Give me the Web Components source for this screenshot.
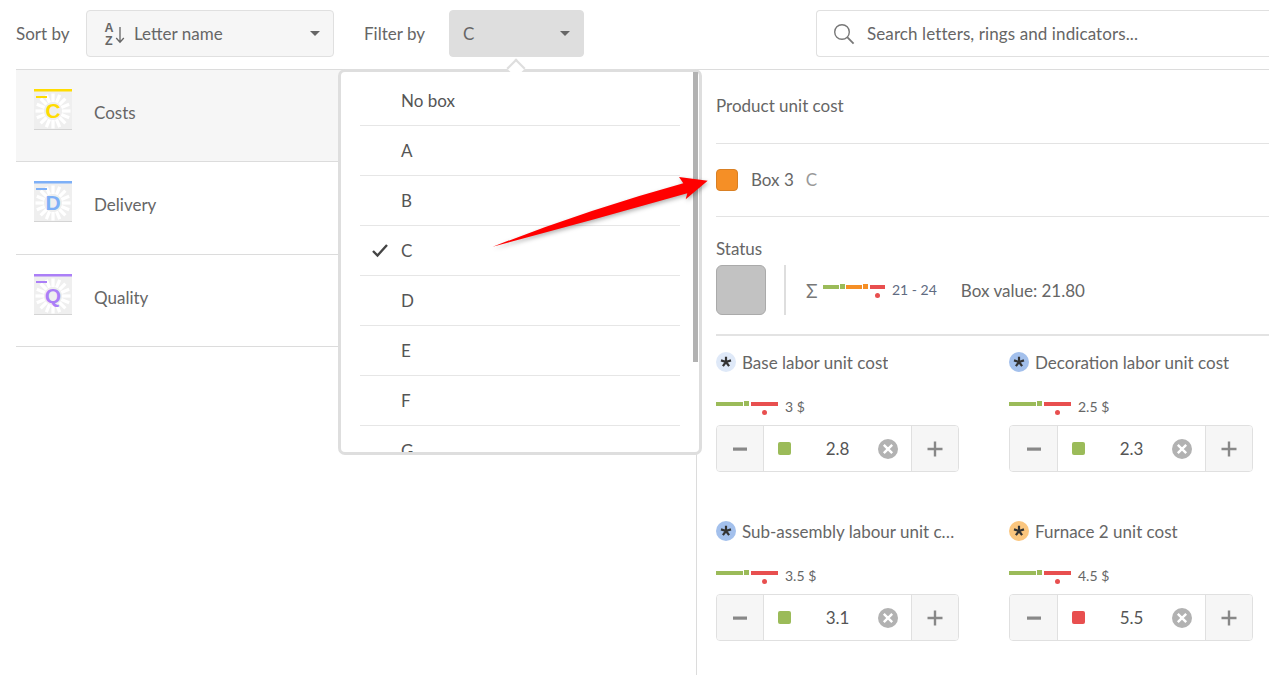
<!DOCTYPE html>
<html>
<head>
<meta charset="utf-8">
<title>Letters</title>
<style>
  html, body {
    margin: 0;
    height: 675px;
    overflow: hidden;
    background: #fff;
    font-family: "Lato", "Noto Sans", sans-serif;
    color: #666;
  }
</style>
</head>
<body>
<letters-page></letters-page>

<script>
const font = `"Lato", "Noto Sans", sans-serif`;

const colors = {
  green: "#9bbb59",
  orange: "#f58f26",
  red: "#e84f4f",
  line: "#e3e3e3"
};

class SelectBox extends HTMLElement {
  constructor(...args) {
    super(...args);
    this.attachShadow({ mode: "open" });
  }

  connectedCallback() {
    this.shadowRoot.innerHTML = `
      <style>
        :host {
          display: flex;
          align-items: center;
          box-sizing: border-box;
          height: 47px;
          padding: 0 13px 0 13px;
          background: #f6f6f6;
          border: 1px solid #e0e0e0;
          border-radius: 4px;
          font-size: 17px;
          color: #666;
        }
        :host([open]) {
          background: #dedede;
          border-color: #dedede;
        }
        .text { flex: 1; display: flex; align-items: center; gap: 8px; }
        .caret {
          width: 0;
          height: 0;
          border-left: 5px solid transparent;
          border-right: 5px solid transparent;
          border-top: 5px solid #666;
        }
      </style>
      <span class="text"><slot></slot></span>
      <span class="caret"></span>
    `;
  }
}

class SearchBox extends HTMLElement {
  constructor(...args) {
    super(...args);
    this.attachShadow({ mode: "open" });
  }

  connectedCallback() {
    this.shadowRoot.innerHTML = `
      <style>
        :host {
          display: flex;
          align-items: center;
          gap: 12px;
          box-sizing: border-box;
          height: 47px;
          padding-left: 16px;
          border: 1px solid #e0e0e0;
          border-radius: 4px 0 0 4px;
          border-right: 0;
          font-size: 17px;
          letter-spacing: .1px;
          color: #666;
        }
        svg { display: block; }
      </style>
      <svg width="22" height="22" viewBox="0 0 22 22" fill="none" stroke="#777" stroke-width="1.4">
        <circle cx="9" cy="9" r="7.3"></circle>
        <path d="M14.2 14.2 L20.6 20.6" stroke-width="1.8"></path>
      </svg>
      <slot></slot>
    `;
  }
}

class LetterRow extends HTMLElement {
  constructor(...args) {
    super(...args);
    this.attachShadow({ mode: "open" });
  }

  ticks() {
    let out = "";
    for (let i = 0; i < 16; i++) {
      out += `<line x1="19" y1="10" x2="19" y2="1.5" transform="rotate(${i * 22.5} 19 19)"></line>`;
    }
    return out;
  }

  connectedCallback() {
    const color = this.getAttribute("color");
    const letter = this.getAttribute("letter");
    this.shadowRoot.innerHTML = `
      <style>
        :host {
          display: flex;
          box-sizing: border-box;
          height: 92.33px;
          padding: 19px 0 0 18px;
          border-bottom: 1px solid #dcdcdc;
          font-size: 17px;
          color: #666;
        }
        :host([active]) { background: #f6f6f6; }
        .icon {
          width: 38px;
          height: 41px;
          margin-right: 22px;
          flex: none;
        }
        svg { display: block; }
        svg line { stroke: #fff; stroke-width: 3.2; }
        .label { line-height: 48px; }
      </style>
      <span class="icon">
        <svg width="38" height="41" viewBox="0 0 38 41">
          <rect y="0" width="38" height="41" fill="#efefef"></rect>
          <g transform="translate(0 3)">${this.ticks()}</g>
          <rect y="0" width="38" height="2.5" fill="${color}"></rect>
          <rect y="40" width="38" height="1" fill="#d4d4d4"></rect>
          <rect x="2" y="7" width="11" height="2" fill="${color}"></rect>
          <text x="19" y="29" text-anchor="middle" font-family="'Liberation Sans', sans-serif" font-weight="700" font-size="21" fill="${color}">${letter}</text>
        </svg>
      </span>
      <span class="label"><slot></slot></span>
    `;
  }
}

class FilterMenu extends HTMLElement {
  constructor(...args) {
    super(...args);
    this.attachShadow({ mode: "open" });
  }

  connectedCallback() {
    this.shadowRoot.innerHTML = `
      <style>
        :host {
          position: absolute;
          left: 338px;
          top: 69px;
          width: 364px;
          height: 386px;
          box-sizing: border-box;
          background: #fff;
          border: 3px solid #dedede;
          border-radius: 7px;
          z-index: 2;
        }
        .nub {
          position: absolute;
          left: 166px;
          top: -13px;
          width: 15px;
          height: 15px;
          background: #fff;
          border-left: 3px solid #dedede;
          border-top: 3px solid #dedede;
          transform: rotate(45deg) scale(.75);
        }
        .scroll {
          height: 376px;
          overflow: hidden;
          padding: 4px 19px 0 19px;
        }
        .bar {
          position: absolute;
          right: 1px;
          top: 0;
          width: 5px;
          height: 290px;
          background: #b2b2b2;
        }
      </style>
      <span class="nub"></span>
      <div class="scroll"><slot></slot></div>
      <span class="bar"></span>
    `;
  }
}

class MenuItem extends HTMLElement {
  constructor(...args) {
    super(...args);
    this.attachShadow({ mode: "open" });
  }

  connectedCallback() {
    this.shadowRoot.innerHTML = `
      <style>
        :host {
          display: flex;
          align-items: center;
          box-sizing: border-box;
          height: 50px;
          padding-left: 41px;
          border-bottom: 1px solid #e6e6e6;
          font-size: 17px;
          color: #555;
          position: relative;
        }
        svg { position: absolute; left: 11px; top: 17px; }
      </style>
      ${this.hasAttribute("checked") ? `
        <svg width="18" height="15" viewBox="0 0 18 15" fill="none" stroke="#444" stroke-width="2.4">
          <path d="M2 8 L6.5 12.5 L16 2"></path>
        </svg>` : ""}
      <slot></slot>
    `;
  }
}

class RangeBar extends HTMLElement {
  constructor(...args) {
    super(...args);
    this.attachShadow({ mode: "open" });
  }

  connectedCallback() {
    const wide = this.hasAttribute("wide");
    this.shadowRoot.innerHTML = `
      <style>
        :host {
          display: inline-flex;
          position: relative;
          height: 4px;
          gap: 1px;
          align-items: flex-start;
        }
        i { display: block; height: 4px; }
        i.tick { height: 5px; margin: -1px 1px 0 0; }
        i.plain { margin-right: 0; }
        b {
          position: absolute;
          width: 5px;
          height: 5px;
          top: 8px;
          border-radius: 50%;
          background: ${colors.red};
        }
      </style>
      ${wide ? `
        <i style="width:16px;background:${colors.green}"></i>
        <i class="tick plain" style="width:5px;background:${colors.green}"></i>
        <i style="width:16px;background:${colors.orange}"></i>
        <i class="tick" style="width:5px;background:${colors.orange}"></i>
        <i style="width:15px;background:${colors.red}"></i>
        <b style="left:51.5px"></b>
      ` : `
        <i style="width:27px;background:${colors.green}"></i>
        <i class="tick" style="width:5px;background:${colors.green}"></i>
        <i style="width:27px;background:${colors.red}"></i>
        <b style="left:46px"></b>
      `}
    `;
  }
}

class NumberStepper extends HTMLElement {
  constructor(...args) {
    super(...args);
    this.attachShadow({ mode: "open" });
  }

  connectedCallback() {
    const color = this.getAttribute("color");
    this.shadowRoot.innerHTML = `
      <style>
        :host {
          display: flex;
          box-sizing: border-box;
          width: 100%;
          height: 47px;
          border: 1px solid #e0e0e0;
          border-radius: 4px;
          overflow: hidden;
          font-size: 17px;
          color: #555;
        }
        .btn {
          width: 46px;
          flex: none;
          display: flex;
          align-items: center;
          justify-content: center;
          background: #f6f6f6;
        }
        .btn.first { width: var(--side, 46px); }
        .mid {
          flex: 1;
          display: flex;
          align-items: center;
          padding: 0 13px 0 14px;
          border-left: 1px solid #e0e0e0;
          border-right: 1px solid #e0e0e0;
        }
        .dot {
          width: 13px;
          height: 13px;
          border-radius: 2px;
          background: ${color};
        }
        .val { flex: 1; text-align: center; padding-left: 6px; }
        svg { display: block; }
      </style>
      <span class="btn first">
        <svg width="16" height="16" viewBox="0 0 16 16"><rect x="1" y="6.5" width="14" height="3.2" fill="#888"></rect></svg>
      </span>
      <span class="mid">
        <span class="dot"></span>
        <span class="val"><slot></slot></span>
        <svg width="20" height="20" viewBox="0 0 20 20">
          <circle cx="10" cy="10" r="10" fill="#b2b2b2"></circle>
          <path d="M5.8 5.8 L14.2 14.2 M14.2 5.8 L5.8 14.2" stroke="#fff" stroke-width="2.4"></path>
        </svg>
      </span>
      <span class="btn">
        <svg width="16" height="16" viewBox="0 0 16 16"><path d="M0.5 8 H15.5 M8 0.5 V15.5" stroke="#888" stroke-width="2.4"></path></svg>
      </span>
    `;
  }
}

class CostField extends HTMLElement {
  constructor(...args) {
    super(...args);
    this.attachShadow({ mode: "open" });
  }

  connectedCallback() {
    this.shadowRoot.innerHTML = `
      <style>
        :host {
          display: block;
          height: 169px;
          font-size: 17px;
          color: #666;
        }
        .title {
          display: flex;
          align-items: center;
          gap: 6px;
          height: 22px;
          margin-bottom: 22px;
        }
        .title span:last-child {
          white-space: nowrap;
          overflow: hidden;
          text-overflow: ellipsis;
        }
        .star {
          flex: none;
          width: 20px;
          height: 20px;
          border-radius: 50%;
          background: ${this.getAttribute("tone")};
          display: flex;
          align-items: center;
          justify-content: center;
        }
        .limit {
          display: flex;
          align-items: flex-start;
          gap: 7px;
          height: 21px;
          margin-bottom: 9px;
          font-size: 14px;
        }
        .limit range-bar { margin-top: 7px; }
        .limit span { margin-top: 2px; line-height: 19px; }
        svg { display: block; }
      </style>
      <div class="title">
        <span class="star">
          <svg width="12" height="12" viewBox="0 0 12 12">
            <path d="M6 6 V.8 M6 6 L11 4.4 M6 6 L9.1 10.2 M6 6 L2.9 10.2 M6 6 L1 4.4" stroke="#333" stroke-width="2.2"></path>
          </svg>
        </span>
        <span>${this.getAttribute("label")}</span>
      </div>
      <div class="limit">
        <range-bar></range-bar>
        <span>${this.getAttribute("limit")}</span>
      </div>
      <number-stepper color="${this.getAttribute("color")}">${this.getAttribute("value")}</number-stepper>
    `;
  }
}

class DetailPanel extends HTMLElement {
  constructor(...args) {
    super(...args);
    this.attachShadow({ mode: "open" });
  }

  connectedCallback() {
    this.shadowRoot.innerHTML = `
      <style>
        :host {
          display: block;
          box-sizing: border-box;
          width: 573px;
          height: 605px;
          padding-left: 19px;
          border-left: 1px solid #dcdcdc;
          font-size: 17px;
          color: #666;
        }
        .name {
          display: flex;
          align-items: center;
          box-sizing: border-box;
          height: 74px;
          padding-bottom: 2px;
          border-bottom: 1px solid ${colors.line};
        }
        .box {
          display: flex;
          align-items: center;
          height: 72px;
          border-bottom: 1px solid ${colors.line};
        }
        .box span.up { margin-top: -2px; }
        .swatch {
          width: 22px;
          height: 22px;
          box-sizing: border-box;
          border: 1px solid #d98024;
          border-radius: 4px;
          background: ${colors.orange};
          margin-right: 13px;
        }
        .box em { font-style: normal; color: #999; margin: -2px 0 0 12px; }
        .status {
          height: 119px;
          border-bottom: 2px solid ${colors.line};
          box-sizing: border-box;
          padding-top: 21px;
        }
        .status p { margin: 0 0 6px; line-height: 21px; }
        .row { display: flex; align-items: center; height: 50px; }
        .gray {
          width: 50px;
          height: 50px;
          box-sizing: border-box;
          background: #c2c2c2;
          border: 1px solid #aaa;
          border-radius: 6px;
        }
        .sep { width: 2px; height: 50px; background: #dedede; margin: 0 20px 0 18px; }
        .sum { width: 17px; font-size: 19px; color: #777; }
        .row range-bar { margin-top: -6px; }
        .range { font-size: 14px; margin: -2px 0 0 7px; color: #5f6b82; }
        .value { margin: 0 0 0 24px; }
        .grid {
          display: grid;
          grid-template-columns: 243px 244px;
          column-gap: 50px;
          padding-top: 15px;
        }
      </style>
      <div class="name">Product unit cost</div>
      <div class="box">
        <span class="swatch"></span><span class="up">Box 3</span><em>C</em>
      </div>
      <div class="status">
        <p>Status</p>
        <div class="row">
          <span class="gray"></span>
          <span class="sep"></span>
          <span class="sum">Σ</span>
          <range-bar wide></range-bar>
          <span class="range">21 - 24</span>
          <span class="value">Box value: 21.80</span>
        </div>
      </div>
      <div class="grid"><slot></slot></div>
    `;
  }
}

class LettersPage extends HTMLElement {
  constructor(...args) {
    super(...args);
    this.attachShadow({ mode: "open" });
  }

  connectedCallback() {
    this.shadowRoot.innerHTML = `
      <style>
        :host {
          display: block;
          position: relative;
          width: 1269px;
          height: 675px;
          overflow: hidden;
          font-family: ${font};
          font-size: 17px;
          color: #666;
        }
        .toolbar {
          display: flex;
          align-items: center;
          box-sizing: border-box;
          height: 70px;
          padding: 0 0 3px 16px;
        }
        .toolbar label { white-space: nowrap; flex: none; }
        .sort-label { width: 70px; }
        .filter-label { width: 85px; }
        .rule { height: 1px; background: #dcdcdc; margin: -1px 0 0 16px; }
        .sort { width: 248px; margin-right: 30px; }
        .filter { width: 135px; margin-right: 232px; }
        search-box { flex: 1; margin-right: -1px; }
        .body { display: flex; padding-left: 16px; }
        .list { width: 680px; flex: none; }
        .az { display: block; margin-left: 4px; }
        .arrow {
          position: absolute;
          left: 0;
          top: 0;
          z-index: 3;
          pointer-events: none;
          filter: drop-shadow(1px 2px 2px rgba(0,0,0,.3));
        }
      </style>
      <div class="toolbar">
        <label class="sort-label">Sort by</label>
        <select-box class="sort">
          <svg class="az" width="22" height="26" viewBox="0 0 22 26">
            <text x="0.5" y="11" font-family="'Liberation Sans', sans-serif" font-weight="700" font-size="12.5" fill="#666">A</text>
            <text x="1" y="24" font-family="'Liberation Sans', sans-serif" font-weight="700" font-size="12.5" fill="#666">Z</text>
            <path d="M16 6 V21 M12.2 17 L16 21.3 L19.8 17" fill="none" stroke="#666" stroke-width="1.3"></path>
          </svg>
          Letter name
        </select-box>
        <label class="filter-label">Filter by</label>
        <select-box class="filter" open>C</select-box>
        <search-box>Search letters, rings and indicators...</search-box>
      </div>
      <div class="rule"></div>
      <div class="body">
        <div class="list">
          <letter-row active letter="C" color="#ffdc00">Costs</letter-row>
          <letter-row letter="D" color="#7eb0f7">Delivery</letter-row>
          <letter-row letter="Q" color="#ab7ff7">Quality</letter-row>
        </div>
        <detail-panel>
          <cost-field tone="#dfe9f8" label="Base labor unit cost" limit="3 $" color="${colors.green}" value="2.8"></cost-field>
          <cost-field style="--side:47px" tone="#a3c0ec" label="Decoration labor unit cost" limit="2.5 $" color="${colors.green}" value="2.3"></cost-field>
          <cost-field tone="#a3c0ec" label="Sub-assembly labour unit cost" limit="3.5 $" color="${colors.green}" value="3.1"></cost-field>
          <cost-field style="--side:47px" tone="#fbc67e" label="Furnace 2 unit cost" limit="4.5 $" color="${colors.red}" value="5.5"></cost-field>
        </detail-panel>
      </div>
      <filter-menu>
        <menu-item>No box</menu-item>
        <menu-item>A</menu-item>
        <menu-item>B</menu-item>
        <menu-item checked>C</menu-item>
        <menu-item>D</menu-item>
        <menu-item>E</menu-item>
        <menu-item>F</menu-item>
        <menu-item>G</menu-item>
      </filter-menu>
      <svg class="arrow" width="1269" height="675" viewBox="0 0 1269 675">
        <path d="M492.7 246.7 Q590 209 683.3 183.3 L679 177 L707.7 180.7 L685.7 199.3 L687.3 193.3 Q590 221 492.7 246.7 Z" fill="#f00"></path>
      </svg>
    `;
  }
}

customElements.define("select-box", SelectBox);
customElements.define("search-box", SearchBox);
customElements.define("letter-row", LetterRow);
customElements.define("filter-menu", FilterMenu);
customElements.define("menu-item", MenuItem);
customElements.define("range-bar", RangeBar);
customElements.define("number-stepper", NumberStepper);
customElements.define("cost-field", CostField);
customElements.define("detail-panel", DetailPanel);
customElements.define("letters-page", LettersPage);
</script>
</body>
</html>
